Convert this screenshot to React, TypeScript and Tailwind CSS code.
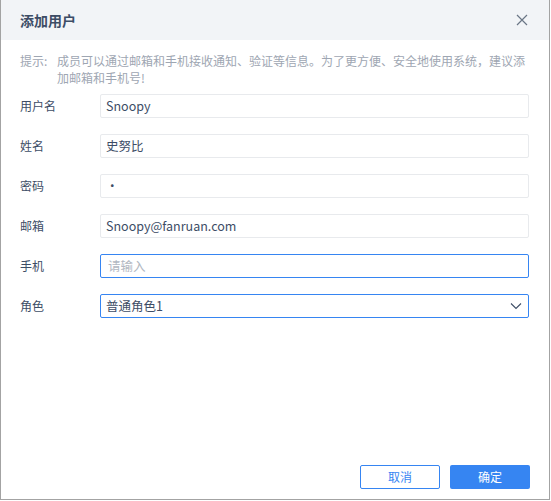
import React from "react";

const font = { fontFamily: '"Noto Sans CJK SC", "Noto Sans", sans-serif' };

function Row({ label, children }: { label: string; children: React.ReactNode }) {
  return (
    <div className="flex items-center h-[24px]">
      <div className="w-[80px] text-[12px] text-[#3d4d66]">{label}</div>
      <div className="flex-1">{children}</div>
    </div>
  );
}

export default function App() {
  return (
    <div className="w-[551px] h-[501px] bg-white" style={font}>
      <div className="w-[550px] h-[500px] border-l border-r border-b border-[#a3a3a3] flex flex-col bg-white">
        <div className="h-[40px] bg-[#f2f4f7] flex items-center justify-between pl-[19px] pr-[20px]">
          <div className="text-[14px] font-bold text-[#3d4d66]">添加用户</div>
          <svg width="12" height="12" viewBox="0 0 12 12" className="mr-[1px]">
            <path d="M1 1 L11 11 M11 1 L1 11" stroke="#6b7686" strokeWidth="1.2" fill="none" />
          </svg>
        </div>
        <div className="flex text-[12px] leading-[17px] text-[#9ea6b2] pl-[19px] pr-[20px] pt-[12px]">
          <div className="w-[37px] shrink-0">提示:</div>
          <div>成员可以通过邮箱和手机接收通知、验证等信息。为了更方便、安全地使用系统，建议添加邮箱和手机号!</div>
        </div>
        <div className="flex flex-col gap-[16px] pl-[19px] pr-[20px] mt-[8px]">
          <Row label="用户名">
            <div className="h-[24px] border border-[#e8eaed] rounded-[2px] px-[5px] flex items-center text-[12.5px] text-[#3d4d66]">Snoopy</div>
          </Row>
          <Row label="姓名">
            <div className="h-[24px] border border-[#e8eaed] rounded-[2px] px-[5px] flex items-center text-[12.5px] text-[#3d4d66]">史努比</div>
          </Row>
          <Row label="密码">
            <div className="h-[24px] border border-[#e8eaed] rounded-[2px] px-[5px] flex items-center text-[12.5px] text-[#3d4d66]">•</div>
          </Row>
          <Row label="邮箱">
            <div className="h-[24px] border border-[#e8eaed] rounded-[2px] px-[5px] flex items-center text-[12.5px] text-[#3d4d66]">Snoopy@fanruan.com</div>
          </Row>
          <Row label="手机">
            <div className="h-[24px] border border-[#3685f2] rounded-[2px] px-[7px] flex items-center text-[12.5px] text-[#b2b8c2]">请输入</div>
          </Row>
          <Row label="角色">
            <div className="h-[24px] border border-[#3685f2] rounded-[2px] px-[5px] flex items-center justify-between text-[12.5px] text-[#3d4d66]">
              <span>普通角色1</span>
              <svg width="12" height="8" viewBox="0 0 12 8" className="mr-[1px]">
                <path d="M1 1.5 L6 6.5 L11 1.5" stroke="#3d4d66" strokeWidth="1.1" fill="none" />
              </svg>
            </div>
          </Row>
        </div>
        <div className="flex-1" />
        <div className="flex justify-end gap-[10px] pr-[19px] pb-[10px]">
          <button className="w-[80px] h-[24px] border border-[#3685f2] rounded-[2px] text-[12px] text-[#3685f2] bg-white">取消</button>
          <button className="w-[80px] h-[24px] rounded-[2px] text-[12px] text-white bg-[#3685f2]">确定</button>
        </div>
      </div>
    </div>
  );
}
